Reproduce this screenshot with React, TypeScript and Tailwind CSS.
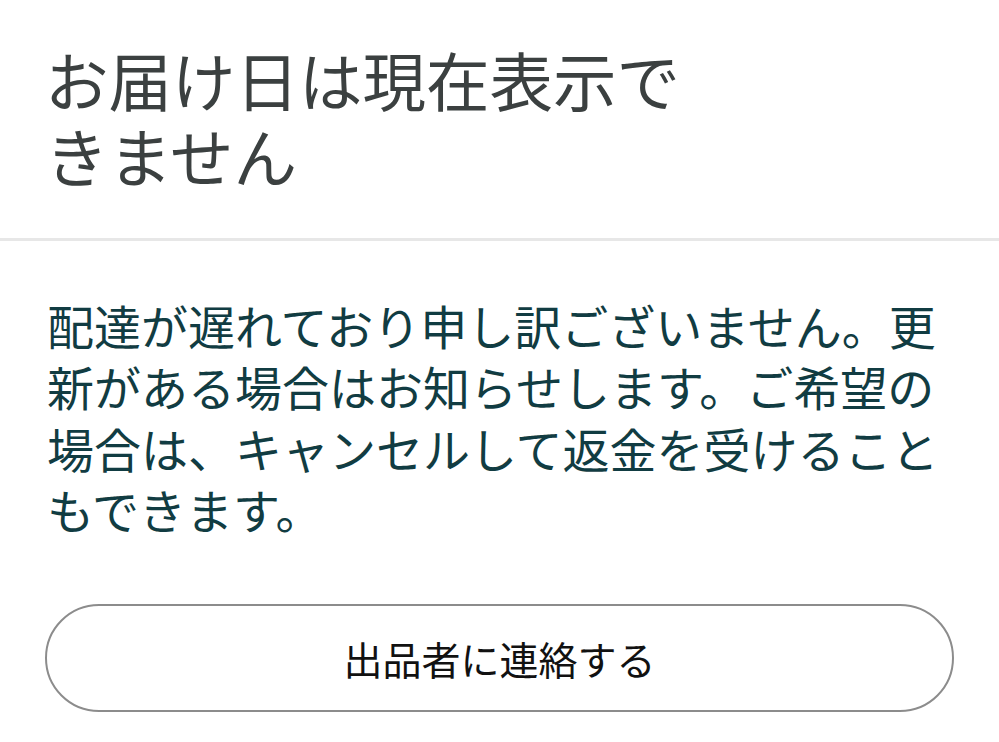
import React from 'react';

export default function App() {
  return (
    <div
      className="min-h-screen bg-white"
      style={{ fontFamily: '"Noto Sans CJK JP", "Noto Sans", sans-serif' }}
    >
      <div className="pl-[45px] pt-[40px] pb-[46px]">
        <h1 className="w-[680px] text-[63.5px] leading-[76px] font-normal text-[#3b4040]">
          お届け日は現在表示できません
        </h1>
      </div>
      <div className="h-[3px] bg-[#e7e7e7]" />
      <div className="pl-[47px] pr-[48px] pt-[53px]">
        <p className="text-[47px] leading-[61.3px] text-[#113c42]">
          配達が遅れており申し訳ございません。更新がある場合はお知らせします。ご希望の場合は、キャンセルして返金を受けることもできます。
        </p>
      </div>
      <div className="px-[45px] pt-[65px]">
        <button className="w-full h-[108px] rounded-full border-2 border-[#8c8c8c] bg-white text-[39px] text-[#111111]">
          出品者に連絡する
        </button>
      </div>
    </div>
  );
}
